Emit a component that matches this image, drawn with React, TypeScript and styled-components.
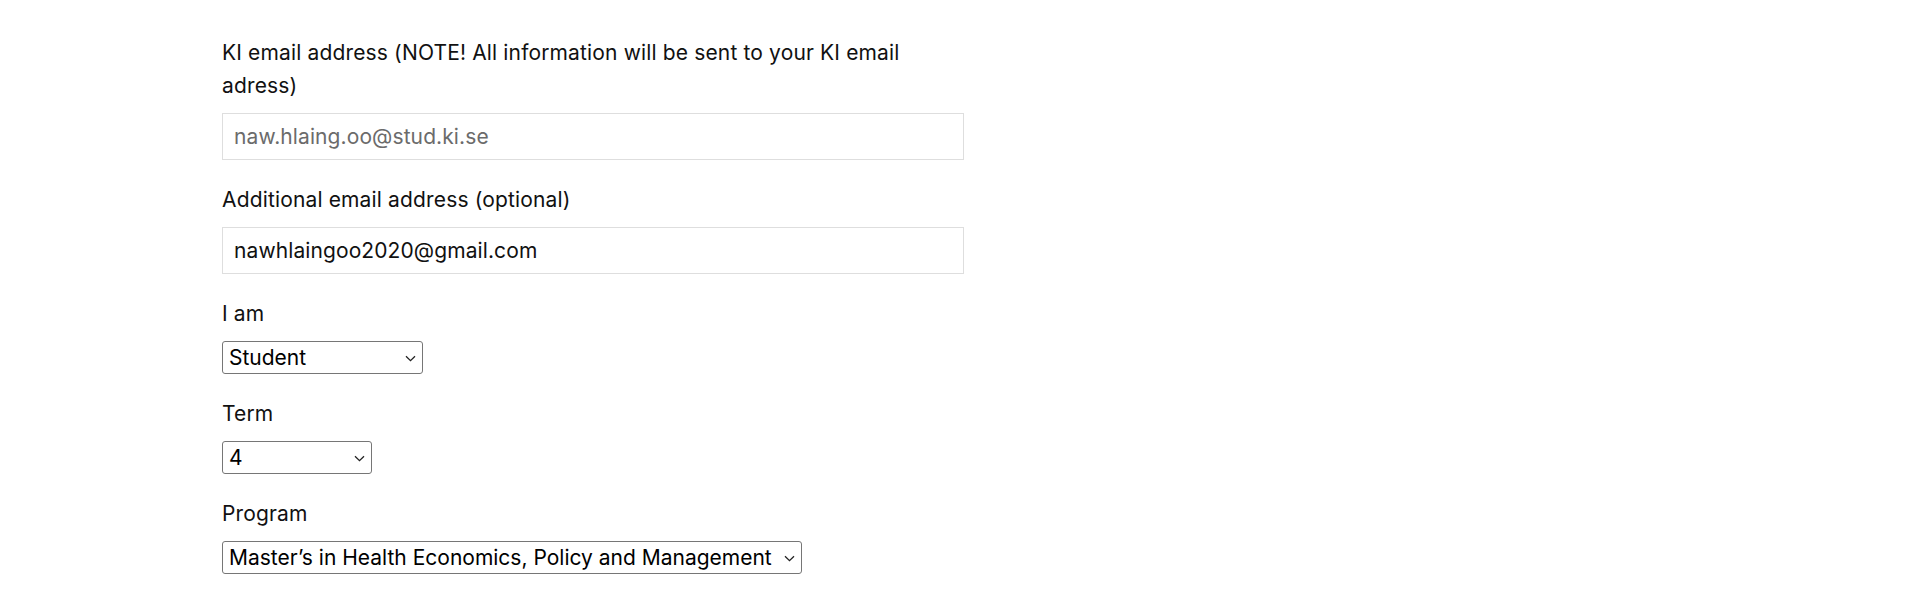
import React from "react";
import styled, {createGlobalStyle} from "styled-components";

const GlobalStyle = createGlobalStyle`
	html,
	body {
		margin: 0;
		padding: 0;
		background: #ffffff;
	}

	body {
		font-family: "Inter", "Noto Sans", sans-serif;
		color: #111111;
	}
`;

const Page = styled.div`
	width: 1920px;
	height: 600px;
	padding: 36px 0 0 222px;
	box-sizing: border-box;
	overflow: hidden;
`;

const Form = styled.form`
	display: flex;
	flex-direction: column;
	gap: 23px;
	width: 742px;
`;

const Field = styled.div`
	display: flex;
	flex-direction: column;
	align-items: flex-start;
	gap: 11px;
`;

const Label = styled.label`
	font-size: 21px;
	line-height: 33px;
	letter-spacing: 0.15px;
	color: #111111;
`;

const TextInput = styled.input<{$muted?: boolean}>`
	width: 100%;
	height: 47px;
	box-sizing: border-box;
	padding: 0 11px;
	border: 1px solid #dedede;
	border-radius: 0;
	font-family: inherit;
	font-size: 21px;
	letter-spacing: 0.1px;
	color: ${(p) => (p.$muted ? "#6b6b6b" : "#111111")};
	background: #ffffff;
	outline: none;
`;

const SelectWrap = styled.div<{$width?: number}>`
	position: relative;
	display: inline-block;
	width: ${(p) => (p.$width ? `${p.$width}px` : "auto")};
`;

const Select = styled.select`
	appearance: none;
	width: 100%;
	height: 33px;
	box-sizing: border-box;
	padding: 0 20px 0 6px;
	border: 1px solid #767676;
	border-radius: 3px;
	background: #ffffff;
	font-family: inherit;
	font-size: 21px;
	color: #000000;
	outline: none;
`;

const Chevron = styled.svg`
	position: absolute;
	right: 7px;
	top: 50%;
	width: 11px;
	height: 7px;
	margin-top: -3px;
	pointer-events: none;
`;

const ChevronIcon = () => (
	<Chevron viewBox="0 0 11 7" fill="none">
		<path d="M1 1.2 5.5 5.6 10 1.2" stroke="#222" strokeWidth="1.3" />
	</Chevron>
);

const App = () => {
	return (
		<Page>
			<GlobalStyle />
			<Form>
				<Field>
					<Label>
						KI email address (NOTE! All information will be sent to your KI email
						adress)
					</Label>
					<TextInput $muted readOnly defaultValue="naw.hlaing.oo@stud.ki.se" />
				</Field>
				<Field>
					<Label>Additional email address (optional)</Label>
					<TextInput defaultValue="nawhlaingoo2020@gmail.com" />
				</Field>
				<Field>
					<Label>I am</Label>
					<SelectWrap $width={201}>
						<Select defaultValue="Student">
							<option>Student</option>
							<option>Staff</option>
						</Select>
						<ChevronIcon />
					</SelectWrap>
				</Field>
				<Field>
					<Label>Term</Label>
					<SelectWrap $width={150}>
						<Select defaultValue="4">
							<option>1</option>
							<option>2</option>
							<option>3</option>
							<option>4</option>
						</Select>
						<ChevronIcon />
					</SelectWrap>
				</Field>
				<Field>
					<Label>Program</Label>
					<SelectWrap $width={580}>
						<Select defaultValue="hepm">
							<option value="hepm">
								Master’s in Health Economics, Policy and Management
							</option>
						</Select>
						<ChevronIcon />
					</SelectWrap>
				</Field>
			</Form>
		</Page>
	);
};

export default App;
